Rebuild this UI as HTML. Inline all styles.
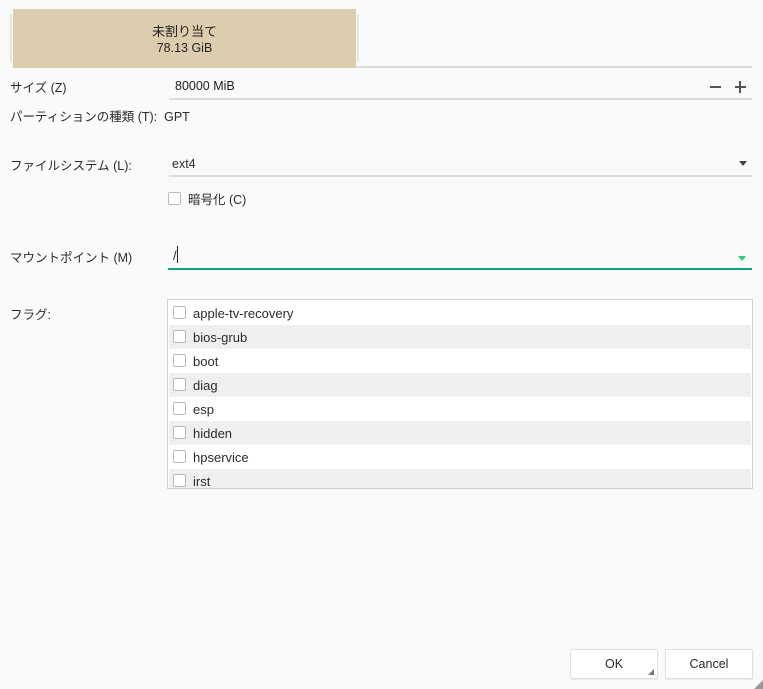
<!DOCTYPE html>
<html><head><meta charset="utf-8"><style>
body{margin:0;width:763px;height:689px;background:#f9fafa;font-family:"Liberation Sans","Noto Sans CJK JP",sans-serif;font-size:12.5px;color:#2b2b2b;position:relative;overflow:hidden}
.a{position:absolute}
.cb{position:absolute;width:11px;height:11px;border:1px solid #bbb;border-radius:2px;background:#fff}
.row{position:absolute;left:1px;right:1px;height:24px}
.row span{position:absolute;left:24px;top:5px;font-size:13px}
.row .cb{left:4px;top:5px}
.g{background:#efefef}
.btn{position:absolute;top:649px;width:86px;height:28px;background:#fff;border:1px solid #e0e0e0;border-radius:2px;text-align:center;line-height:28px;box-shadow:0 1px 1px rgba(0,0,0,.08)}
</style></head><body>
<div class="a" style="left:10px;top:14px;width:2px;height:48px;background:#e6e6e6"></div>
<div class="a" style="left:357px;top:14px;width:2px;height:48px;background:#e6e6e6"></div>
<div class="a" style="left:13px;top:9px;width:343px;height:59px;background:#dccdae;text-align:center;color:#222">
<div style="margin-top:12px;font-size:13px">未割り当て</div><div style="font-size:12.5px;margin-top:1px">78.13 GiB</div></div>
<div class="a" style="left:356px;top:66px;width:396px;height:2px;background:#dcdcdc"></div>

<div class="a" style="left:10px;top:77px">サイズ (Z)</div>
<div class="a" style="left:175px;top:79px;color:#222">80000 MiB</div>
<div class="a" style="left:710px;top:86px;width:11px;height:2px;background:#555"></div>
<div class="a" style="left:735px;top:86px;width:11px;height:2px;background:#555"></div>
<div class="a" style="left:739px;top:81px;width:2px;height:12px;background:#555"></div>
<div class="a" style="left:169px;top:98px;width:583px;height:2px;background:#dcdcdc"></div>

<div class="a" style="left:10px;top:106px">パーティションの種類 (T):&nbsp; GPT</div>

<div class="a" style="left:10px;top:155px">ファイルシステム (L):</div>
<div class="a" style="left:172px;top:157px">ext4</div>
<div class="a" style="left:739px;top:161px;width:0;height:0;border-left:4px solid transparent;border-right:4px solid transparent;border-top:5px solid #444"></div>
<div class="a" style="left:169px;top:175px;width:583px;height:2px;background:#dcdcdc"></div>

<div class="cb" style="left:168px;top:192px"></div>
<div class="a" style="left:188px;top:189px">暗号化 (C)</div>

<div class="a" style="left:10px;top:247px">マウントポイント (M)</div>
<div class="a" style="left:173px;top:248px;font-size:13px">/</div>
<div class="a" style="left:177px;top:246px;width:1px;height:17px;background:#222"></div>
<div class="a" style="left:738px;top:256px;width:0;height:0;border-left:4px solid transparent;border-right:4px solid transparent;border-top:5px solid #2ecc71"></div>
<div class="a" style="left:168px;top:268px;width:584px;height:2px;background:#16a085"></div>

<div class="a" style="left:10px;top:304px">フラグ:</div>
<div class="a" style="left:167px;top:299px;width:584px;height:188px;border:1px solid #d0d0d0;background:#fff;overflow:hidden">
<div class="row" style="top:1px"><div class="cb"></div><span>apple-tv-recovery</span></div>
<div class="row g" style="top:25px"><div class="cb"></div><span>bios-grub</span></div>
<div class="row" style="top:49px"><div class="cb"></div><span>boot</span></div>
<div class="row g" style="top:73px"><div class="cb"></div><span>diag</span></div>
<div class="row" style="top:97px"><div class="cb"></div><span>esp</span></div>
<div class="row g" style="top:121px"><div class="cb"></div><span>hidden</span></div>
<div class="row" style="top:145px"><div class="cb"></div><span>hpservice</span></div>
<div class="row g" style="top:169px"><div class="cb"></div><span>irst</span></div>
</div>

<div class="btn" style="left:570px">OK<div class="a" style="right:3px;bottom:3px;width:0;height:0;border-left:6px solid transparent;border-bottom:6px solid #777"></div></div>
<div class="btn" style="left:665px">Cancel</div>
<div class="a" style="right:0;bottom:0;width:0;height:0;border-left:9px solid transparent;border-bottom:9px solid #999"></div>
</body></html>
